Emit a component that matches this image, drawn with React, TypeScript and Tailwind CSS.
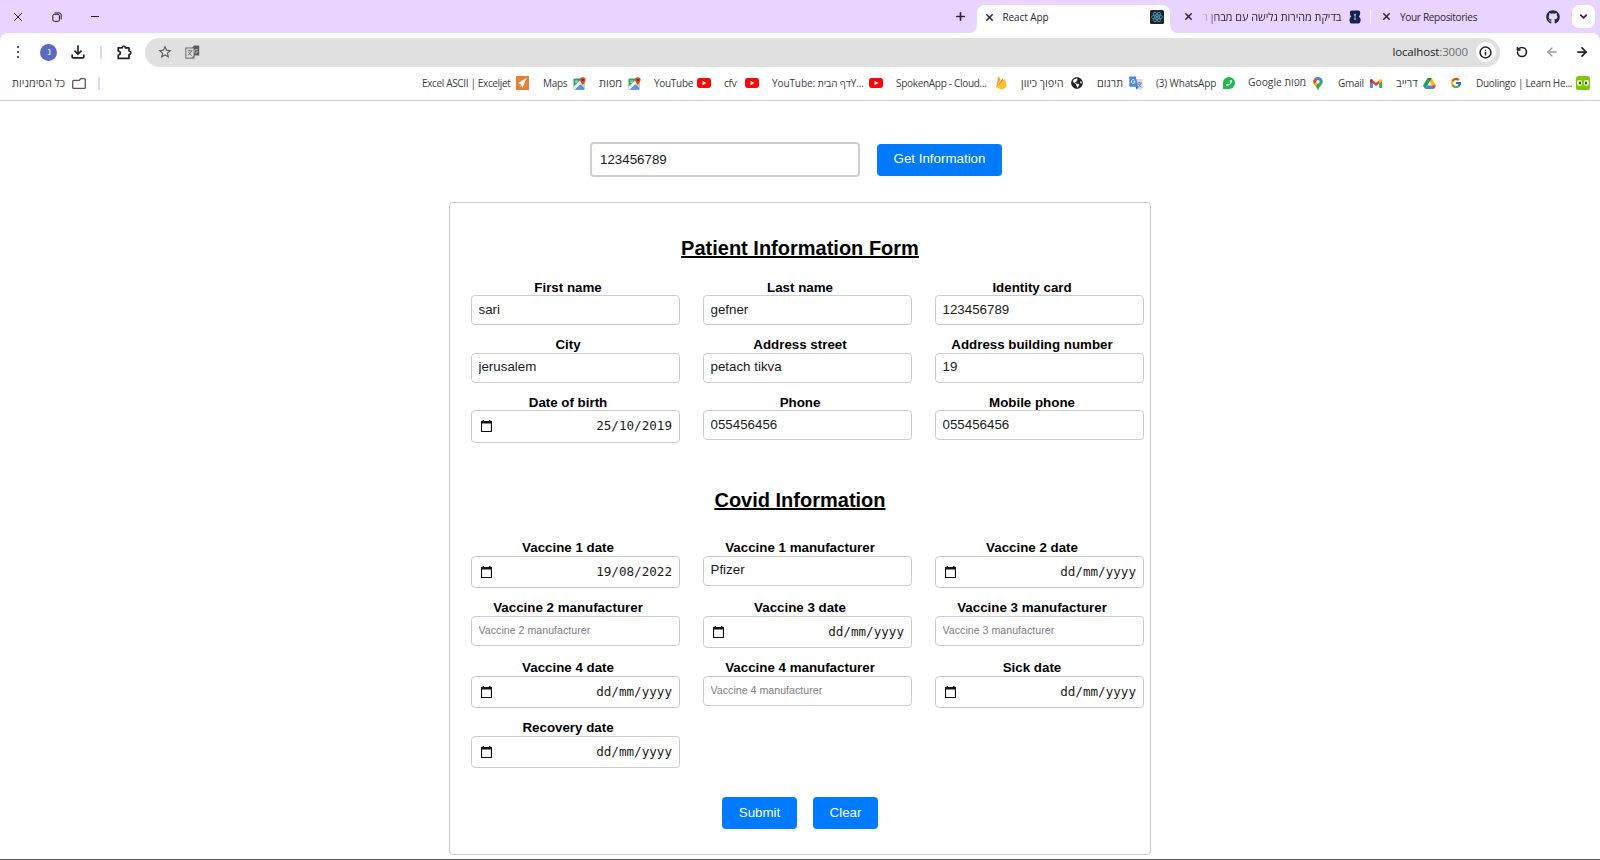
import React from "react";
import { ArrowLeft, ArrowRight, ChevronDown, Info, Plus, RotateCcw, X } from "lucide-react";
import { FaGithub, FaGlobeAmericas, FaPhoneAlt } from "react-icons/fa";
import { FcGoogle } from "react-icons/fc";
import { MdOutlineFileDownload, MdStarBorder } from "react-icons/md";

/* ---------- icons ---------- */

const Restore = () => (
  <svg width="10" height="10" viewBox="0 0 10 10" fill="none" stroke="#1d1a22" strokeWidth="1">
    <rect x="0.8" y="2.3" width="6.6" height="7" rx="1.5" />
    <path d="M2.6 0.9H7.2Q9.2 0.9 9.2 3V7.4" />
  </svg>
);

const TabCorner = ({ className }: { className: string }) => (
  <svg width="8" height="8" viewBox="0 0 8 8" className={className}>
    <path d="M8 0V8H0A8 8 0 0 0 8 0Z" fill="#fff" />
  </svg>
);

const Puzzle = () => (
  <svg width="15" height="15" viewBox="0 0 15 15" fill="none" stroke="#222" strokeWidth="1.7" strokeLinejoin="round">
    <path d="M1.2 2.8H5.2Q5.4 1 6.8 1Q8.2 1 8.4 2.8H12V6Q13.9 6.3 13.9 7.8Q13.9 9.3 12 9.6V13.4H1.2V10.2Q3.4 9.6 3.4 8Q3.4 6.4 1.2 5.9Z" />
  </svg>
);

const ReactLogo = () => (
  <svg width="14" height="14" viewBox="0 0 14 14">
    <rect width="14" height="14" rx="1.5" fill="#20232a" />
    <g fill="none" stroke="#4fb3cf" strokeWidth="0.7">
      <ellipse cx="7" cy="7" rx="5.4" ry="2.1" />
      <ellipse cx="7" cy="7" rx="5.4" ry="2.1" transform="rotate(60 7 7)" />
      <ellipse cx="7" cy="7" rx="5.4" ry="2.1" transform="rotate(120 7 7)" />
    </g>
    <circle cx="7" cy="7" r="1.1" fill="#4fb3cf" />
  </svg>
);

const HourglassLogo = () => (
  <svg width="12" height="14" viewBox="0 0 12 14">
    <path d="M2.5 0.5H9.5Q11.5 0.8 11.3 3Q11 5.5 10 6.6Q11.8 8 11.7 10.6Q11.5 13.3 9 13.5H2.6Q0.5 13.2 0.4 10.6Q0.4 8 2 6.6Q1 5.5 0.8 3Q0.7 0.8 2.5 0.5Z" fill="#1b2250" />
    <circle cx="6" cy="4.8" r="1" fill="#8fc3dc" />
    <path d="M5.6 5H6.4V9H5.6Z" fill="#8fc3dc" />
    <circle cx="6" cy="9.2" r="0.9" fill="#8fc3dc" />
  </svg>
);

const TranslatePage = () => (
  <svg width="15" height="15" viewBox="0 0 15 15">
    <path d="M7.5 2.2L9 0.5H14.2V10.4H7.5Z" fill="#5c5c5c" />
    <rect x="0.8" y="3" width="8.2" height="10.2" fill="#e0e0e0" stroke="#6a6a6a" />
    <path d="M2.6 5.8H7.4M5 4.8V5.8M6.6 5.8Q5.8 8.8 2.8 10.4M3.4 7Q4.6 9.4 6.8 10.6" stroke="#6a6a6a" fill="none" strokeWidth="0.9" />
    <path d="M5.5 13.6L9.2 10.4V12Z" fill="#5c5c5c" />
    <path d="M12.8 4.6H10.8A1.7 1.7 0 1 0 12.6 6.4H11.4" stroke="#c4c4c4" fill="none" strokeWidth="0.8" />
  </svg>
);

const Folder = () => (
  <svg width="14" height="11" viewBox="0 0 14 11" fill="none" stroke="#55585c" strokeWidth="1.3">
    <path d="M1.6 2.3H7.2L8.9 0.7H12.4Q13.3 0.7 13.3 1.6V9.4Q13.3 10.3 12.4 10.3H1.6Q0.7 10.3 0.7 9.4V3.2Q0.7 2.3 1.6 2.3Z" />
  </svg>
);

const Exceljet = () => (
  <svg width="13" height="14" viewBox="0 0 13 14">
    <rect width="13" height="14" fill="#e97f33" />
    <path d="M10.8 1.8L2.2 7L5.2 8.4L6.4 12Z" fill="#fff" />
    <path d="M5 8.6L4.6 11L6 9.6Z" fill="#fff" />
  </svg>
);

const MapsTile = () => (
  <svg width="13" height="13" viewBox="0 0 13 13">
    <rect x="0.5" y="1.5" width="11" height="11" rx="1" fill="#34a063" />
    <path d="M0.7 11.8L6 6.4L11.5 12.5H1.5Z" fill="#4c86e8" />
    <path d="M0.6 9.6L9 1.5H11.5V4L2 12.5H1.2L0.5 12Z" fill="#f1f1ee" />
    <path d="M2.4 12.5L6.6 7.8L11 12.5Z" fill="#5b8ff0" />
    <path d="M7.4 7.2L11.5 11.6V5.4Z" fill="#cfd2d4" />
    <path d="M2.2 4H5M2.2 5.4H4.4" stroke="#d6efe0" strokeWidth="0.8" />
    <path d="M9.8 0.2A2.8 2.8 0 0 1 12.6 3Q12.4 5 9.8 8Q7.2 5 7 3A2.8 2.8 0 0 1 9.8 0.2Z" fill="#d8432f" />
    <circle cx="9.8" cy="3" r="1" fill="#7d1f15" />
  </svg>
);

const YouTubeIcon = () => (
  <svg width="14" height="10" viewBox="0 0 14 10">
    <rect width="14" height="10" rx="2.4" fill="#fb0606" />
    <path d="M5.5 2.8L9.4 5L5.5 7.2Z" fill="#fff" />
  </svg>
);

const Flame = () => (
  <svg width="11" height="14" viewBox="0 0 11 14">
    <path d="M0.3 11L2 0.8Q2.4 0.2 2.8 0.8L4.4 3.6L0.6 11Z" fill="#f5a31d" />
    <path d="M0.4 11L6 3Q6.4 2.5 6.8 3L7.6 5L3 12Z" fill="#f58220" />
    <path d="M0.3 11L8.6 3.2Q9.2 3 9.4 3.6L10.7 11L6.2 13.4Q5.5 13.8 4.8 13.4Z" fill="#fdc12f" />
  </svg>
);

const TranslateIcon = () => (
  <svg width="14" height="14" viewBox="0 0 14 14">
    <path d="M5 3H12.6Q13.6 3 13.6 4V12.6Q13.6 13.6 12.6 13.6H7.5Z" fill="#d5d8dc" />
    <path d="M8.4 7H12.8M10.6 6V7M12 7Q11.4 9.6 8.8 11.4M9.4 8Q10.4 10 12.4 11.2" stroke="#6d7f95" fill="none" strokeWidth="0.9" />
    <path d="M1.2 0.4H6.8L9.2 10.8H1.2Q0.3 10.8 0.3 9.9V1.3Q0.3 0.4 1.2 0.4Z" fill="#4785ec" />
    <path d="M5.6 4.2A1.9 1.9 0 1 0 6.1 5.7H4.4" stroke="#fff" fill="none" strokeWidth="0.9" />
    <path d="M6.6 10.8H9.2L7.5 13.4Z" fill="#2b58b8" />
  </svg>
);

const WhatsApp = () => (
  <span className="flex h-3 w-3 items-center justify-center rounded-full rounded-bl-[3px] bg-[#1fb950]">
    <FaPhoneAlt size={6} color="#fff" className="-scale-x-100" />
  </span>
);

const MapsPin = () => (
  <svg width="10" height="13" viewBox="0 0 10 13">
    <defs>
      <clipPath id="pin">
        <path d="M5 0.2A4.7 4.7 0 0 1 9.7 4.9C9.7 7.4 6.8 8.6 5.6 12.3Q5 13.2 4.4 12.3C3.2 8.6 0.3 7.4 0.3 4.9A4.7 4.7 0 0 1 5 0.2Z" />
      </clipPath>
    </defs>
    <g clipPath="url(#pin)">
      <rect width="10" height="13" fill="#34a853" />
      <path d="M0 0H7L5 4.5L1.2 9L0 6Z" fill="#fbbc04" transform="translate(0 2)" />
      <path d="M0 0H5L4.5 4.5L1.6 6.6L0 5Z" fill="#ea4335" />
      <path d="M3.8 0H10V3L5.6 5.6L2.6 3.2Z" fill="#4285f4" />
    </g>
    <circle cx="5" cy="4.8" r="1.7" fill="#fff" />
  </svg>
);

const GmailIcon = () => (
  <svg width="12" height="9" viewBox="0 0 12 9">
    <path d="M0 1.4L2.8 3.4V9H0.7Q0 9 0 8.3Z" fill="#4285f4" />
    <path d="M12 1.4L9.2 3.4V9H11.3Q12 9 12 8.3Z" fill="#34a853" />
    <path d="M2.8 1.2L6 3.7L9.2 1.2V4.6L6 7L2.8 4.6Z" fill="#ea4335" />
    <path d="M0 1.6Q0 0 1.4 0.1Q2 0.3 2.8 1V4.6L0 2.6Z" fill="#c5221f" />
    <path d="M12 1.6Q12 0 10.6 0.1Q10 0.3 9.2 1V4.6L12 2.6Z" fill="#fbbc04" />
  </svg>
);

const DriveIcon = () => (
  <svg width="13" height="11" viewBox="0 0 13 11">
    <path d="M4.4 0L6.5 3.7L2.2 11L0 7.4Z" fill="#1fa463" />
    <path d="M4.4 0H8.6L13 7.4H8.7Z" fill="#fbbc04" />
    <path d="M2.2 11L4.3 7.4H13L10.8 11Z" fill="#4285f4" />
    <path d="M8.7 7.4H13L10.8 11Z" fill="#ea4335" />
    <path d="M4.4 0H8.6L6.5 3.7Z" fill="#118347" />
  </svg>
);

const Duolingo = () => (
  <svg width="14" height="14" viewBox="0 0 14 14">
    <rect width="14" height="14" rx="2.6" fill="#7ac70c" />
    <rect x="1" y="4" width="5.2" height="6" rx="2.4" fill="#e9f7c8" />
    <rect x="7.8" y="4" width="5.2" height="6" rx="2.4" fill="#e9f7c8" />
    <rect x="3" y="5.4" width="2" height="3.2" rx="1" fill="#3c4a1e" />
    <rect x="9" y="5.4" width="2" height="3.2" rx="1" fill="#3c4a1e" />
    <path d="M6 8.8H8L7 10.4Z" fill="#f5a21b" />
  </svg>
);

const Calendar = () => (
  <svg width="11" height="12" viewBox="0 0 11 12">
    <path d="M0 1H1.5V0H3V1H8V0H9.5V1H11V12H0ZM1.1 3.6V10.9H9.9V3.6Z" fill="#111" fillRule="evenodd" />
  </svg>
);

/* ---------- browser ---------- */

type Bookmark = { text: string; box: string; icon: React.ReactNode };

const bookmarks: Bookmark[] = [
  { text: "Excel ASCII | Exceljet", box: "w-[94px] text-[10px] tracking-[-0.35px]", icon: <Exceljet /> },
  { text: "Maps", box: "w-[30px] ml-[14px] text-[10px] tracking-[-0.3px]", icon: <MapsTile /> },
  { text: "מפות", box: "w-[29px] ml-[13px] text-[11px]", icon: <MapsTile /> },
  { text: "YouTube", box: "w-[43px] ml-[13px] text-[10px] tracking-[-0.3px]", icon: <YouTubeIcon /> },
  { text: "cfv", box: "w-[21px] ml-[13px] text-[10px] tracking-[-0.2px]", icon: <YouTubeIcon /> },
  { text: "YouTube: דף הביתY...", box: "w-[97px] ml-[13px] text-[10px] tracking-[-0.1px]", icon: <YouTubeIcon /> },
  { text: "SpokenApp - Cloud...", box: "w-[100px] ml-[13px] text-[10px] tracking-[-0.3px]", icon: <Flame /> },
  { text: "היפוך כיוון", box: "w-[50px] ml-[14px] text-[10.8px]", icon: <FaGlobeAmericas size={12} color="#202124" /> },
  { text: "תרגום", box: "w-[32px] ml-[14px] text-[10.8px]", icon: <TranslateIcon /> },
  { text: "(3) WhatsApp", box: "w-[67px] ml-[13px] text-[10px] tracking-[-0.15px]", icon: <WhatsApp /> },
  { text: "Google מפות", box: "w-[65px] ml-[13px] text-[10.3px]", icon: <MapsPin /> },
  { text: "Gmail", box: "w-[32px] ml-[15px] text-[10px] tracking-[-0.25px]", icon: <GmailIcon /> },
  { text: "דרייב", box: "w-[27px] ml-[14px] text-[10.8px]", icon: <DriveIcon /> },
  { text: "", box: "w-0 ml-[14px]", icon: <FcGoogle size={12} /> },
  { text: "Duolingo | Learn He...", box: "w-[100px] ml-[14px] text-[10px] tracking-[-0.3px]", icon: <Duolingo /> },
];

function TitleBar() {
  return (
    <div className="flex h-[33px] shrink-0 items-center bg-[#e8d4ff] text-[#2b2631]">
      <X size={14} strokeWidth={1.7} className="ml-[11px]" color="#1d1a22" />
      <div className="ml-[27px]"><Restore /></div>
      <div className="ml-[29px] h-px w-[8px] bg-[#1d1a22]" />
      <div className="flex-1" />
      <Plus size={13} strokeWidth={3} className="mr-[10px]" />
      <div className="relative mt-[5px] flex h-[28px] w-[193px] items-center rounded-t-[8px] bg-white pb-[4px]">
        <TabCorner className="absolute bottom-0 -left-2" />
        <TabCorner className="absolute -right-2 bottom-0 -scale-x-100" />
        <X size={11} strokeWidth={3.2} className="ml-[7px]" />
        <span className="ml-[8px] w-[147px] pt-[1px] text-[10px] tracking-[-0.1px] whitespace-nowrap">React App</span>
        <ReactLogo />
      </div>
      <X size={11} strokeWidth={3.2} className="ml-[13px]" />
      <div dir="rtl" className="ml-[8px] w-[140px] overflow-hidden pt-[1px] text-[10.8px] whitespace-nowrap [mask-image:linear-gradient(to_right,transparent,black_16px)]">
        בדיקת מהירות גלישה עם מבחן ר
      </div>
      <div className="ml-[7px]"><HourglassLogo /></div>
      <div className="ml-[9px] h-[14px] w-[1.5px] bg-white/80" />
      <X size={11} strokeWidth={3.2} className="ml-[10px]" />
      <span className="ml-[8px] w-[146px] pt-[1px] text-[10px] tracking-[-0.3px] whitespace-nowrap">Your Repositories</span>
      <FaGithub size={14} color="#24292f" />
      <div className="mr-[5px] ml-[12px] flex size-[23px] items-center justify-center rounded-[7px] bg-white">
        <ChevronDown size={11} strokeWidth={3.6} />
      </div>
    </div>
  );
}

function Toolbar() {
  return (
    <div className="shrink-0 bg-[#e8d4ff]">
      <div className="flex h-[38px] items-center rounded-t-[8px] bg-white">
        <div className="ml-[17px] flex flex-col gap-[2.5px]">
          <i className="size-[2.4px] rounded-full bg-[#222]" />
          <i className="size-[2.4px] rounded-full bg-[#222]" />
          <i className="size-[2.4px] rounded-full bg-[#222]" />
        </div>
        <div className="ml-[21px] flex size-[17px] items-center justify-center rounded-full bg-[#5c6bc0] text-[9px] text-white">נ</div>
        <MdOutlineFileDownload size={20} className="ml-[11px]" color="#222" />
        <div className="ml-[12px] h-[13px] w-[1.5px] bg-[#e3d3fb]" />
        <div className="mr-[13px] ml-[15px]"><Puzzle /></div>
        <div className="flex h-[29px] w-[1355px] items-center rounded-full bg-[#e0e0e0]">
          <MdStarBorder size={16} className="ml-[12px]" color="#555" />
          <div className="ml-[12px]"><TranslatePage /></div>
          <div className="flex-1" />
          <span className="text-[11.5px] tracking-[-0.15px] text-[#202124]">localhost<span className="text-[#6f6f6f]">:3000</span></span>
          <div className="mr-[4px] ml-[8px] flex size-[20px] items-center justify-center rounded-full bg-white">
            <Info size={13} strokeWidth={2.8} color="#222" />
          </div>
        </div>
        <RotateCcw size={12} strokeWidth={3.2} className="ml-[16px]" color="#222" />
        <ArrowLeft size={14} strokeWidth={2.5} className="ml-[17px]" color="#9a9a9a" />
        <ArrowRight size={14} strokeWidth={3} className="ml-[16px]" color="#222" />
      </div>
    </div>
  );
}

function BookmarksBar() {
  return (
    <div className="flex h-[30px] shrink-0 items-center border-b border-[#cfcfd2] pb-[5px] text-[#3c3c3c]">
      <span className="ml-[12px] w-[53px] text-[10.9px] whitespace-nowrap">כל הסימניות</span>
      <div className="ml-[7px]"><Folder /></div>
      <div className="ml-[12px] h-[13px] w-[1.5px] bg-[#e3d3fb]" />
      <div className="ml-auto flex items-center pr-[10px]">
        {bookmarks.map((b, i) => (
          <div key={i} className="flex h-[16px] items-center">
            <span className={`${b.box} whitespace-nowrap`}>{b.text}</span>
            {b.icon}
          </div>
        ))}
      </div>
    </div>
  );
}

/* ---------- form ---------- */

type Field = { label: string; kind: "text" | "date"; value?: string };

const patient: Field[] = [
  { label: "First name", kind: "text", value: "sari" },
  { label: "Last name", kind: "text", value: "gefner" },
  { label: "Identity card", kind: "text", value: "123456789" },
  { label: "City", kind: "text", value: "jerusalem" },
  { label: "Address street", kind: "text", value: "petach tikva" },
  { label: "Address building number", kind: "text", value: "19" },
  { label: "Date of birth", kind: "date", value: "25/10/2019" },
  { label: "Phone", kind: "text", value: "055456456" },
  { label: "Mobile phone", kind: "text", value: "055456456" },
];

const covid: Field[] = [
  { label: "Vaccine 1 date", kind: "date", value: "19/08/2022" },
  { label: "Vaccine 1 manufacturer", kind: "text", value: "Pfizer" },
  { label: "Vaccine 2 date", kind: "date" },
  { label: "Vaccine 2 manufacturer", kind: "text" },
  { label: "Vaccine 3 date", kind: "date" },
  { label: "Vaccine 3 manufacturer", kind: "text" },
  { label: "Vaccine 4 date", kind: "date" },
  { label: "Vaccine 4 manufacturer", kind: "text" },
  { label: "Sick date", kind: "date" },
  { label: "Recovery date", kind: "date" },
];

function FormField({ label, kind, value }: Field) {
  return (
    <div className="w-[209px]">
      <div className="h-[15.6px] w-[194px] text-center text-[13.33px] leading-[16px] font-bold text-black">{label}</div>
      {kind === "date" ? (
        <div className="flex h-[32.5px] items-center justify-between rounded-[4px] border border-[#ccc] pr-[7px] pl-[9px] font-['DejaVu_Sans_Mono','Liberation_Mono',monospace] text-[12.6px] text-[#1a1a1a]">
          <Calendar />
          <span className="pt-[1px]">{value ?? "dd/mm/yyyy"}</span>
        </div>
      ) : (
        <input
          readOnly
          value={value ?? ""}
          placeholder={label}
          className="block h-[30px] w-full rounded-[4px] border border-[#ccc] bg-white px-[6.5px] pb-[2px] text-[13.33px] text-[#1a1a1a] placeholder:text-[10.67px] placeholder:text-[#808080]"
        />
      )}
    </div>
  );
}

const blue = "rounded-[4px] bg-[#007bff] text-[13.33px] text-white pb-px";

export default function App() {
  return (
    <div className="flex h-[860px] w-[1600px] flex-col overflow-hidden bg-white font-['Open_Sans','Noto_Sans',sans-serif]">
      <TitleBar />
      <Toolbar />
      <BookmarksBar />
      <main className="flex flex-1 flex-col items-center pt-[41px] font-['Liberation_Sans',Arial,sans-serif]">
        <div className="mr-[8px] flex h-[35px] items-center gap-[17px]">
          <input
            readOnly
            value="123456789"
            className="h-[35px] w-[270px] rounded-[4px] border-2 border-[#cfcfcf] px-[8px] pb-[1px] text-[13.33px] text-[#1a1a1a]"
          />
          <button className={`${blue} h-[32px] w-[125px]`}>Get Information</button>
        </div>
        <form className="mt-[25px] flex h-[653px] w-[702px] flex-col rounded-[4px] border border-[#ccc] pl-[21px]">
          <h2 className="mt-[33px] mr-[21px] h-[24px] text-center text-[20px] leading-[24px] font-bold text-black underline">Patient Information Form</h2>
          <div className="mt-[19.5px] grid auto-rows-[57.5px] grid-cols-[232px_232px_209px]">
            {patient.map((f) => <FormField key={f.label} {...f} />)}
          </div>
          <h2 className="mt-[36px] mr-[21px] h-[24px] text-center text-[20px] leading-[24px] font-bold text-black underline">Covid Information</h2>
          <div className="mt-[28.4px] grid auto-rows-[60px] grid-cols-[232px_232px_209px]">
            {covid.map((f) => <FormField key={f.label} {...f} />)}
          </div>
          <div className="mt-[17px] mr-[21px] flex justify-center gap-[16px]">
            <button type="button" className={`${blue} h-[32px] w-[75px]`}>Submit</button>
            <button type="button" className={`${blue} h-[32px] w-[65px]`}>Clear</button>
          </div>
        </form>
      </main>
      <div className="h-px shrink-0 bg-[#55565a]" />
    </div>
  );
}
